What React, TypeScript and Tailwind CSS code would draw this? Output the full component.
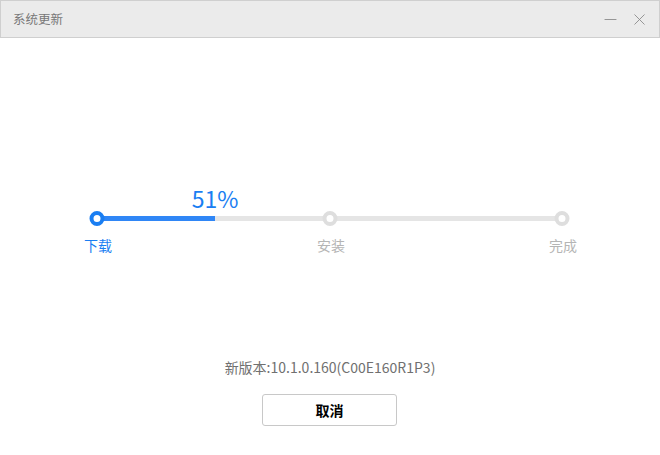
import { X, Minus } from "lucide-react";

const font = { fontFamily: '"Microsoft YaHei", "Noto Sans CJK SC", sans-serif' };

const steps = [
  { label: "下载", x: 97, done: true },
  { label: "安装", x: 330, done: false },
  { label: "完成", x: 562, done: false },
];

export default function App() {
  const percent = 51;
  const trackStart = 97;
  const trackEnd = 562;
  const fillEnd = 215;

  return (
    <div className="h-[455px] w-[660px] bg-white" style={font}>
      <div className="flex h-[38px] items-center justify-between border border-[#cfcfcf] bg-[#ebebeb] pl-3 pr-2.5">
        <span className="text-[12.5px] text-[#777]">系统更新</span>
        <div className="flex items-center gap-2.5 text-[#888]">
          <Minus size={19} strokeWidth={1.1} />
          <X size={19} strokeWidth={1.1} />
        </div>
      </div>

      <div className="relative mt-[148px] h-[80px] w-full">
        <span
          className="absolute top-[1px] -translate-x-1/2 text-[23px] leading-none text-[#1a7ef2]"
          style={{ left: fillEnd }}
        >
          {percent}%
        </span>
        <div
          className="absolute top-[30px] h-[5px] bg-[#e5e5e5]"
          style={{ left: trackStart, width: trackEnd - trackStart }}
        />
        <div
          className="absolute top-[30px] h-[5px] bg-[#2f86f6]"
          style={{ left: trackStart, width: fillEnd - trackStart }}
        />
        {steps.map((s) => (
          <div key={s.label}>
            <span
              className={`absolute top-[25px] h-[15px] w-[15px] -translate-x-1/2 rounded-full border-[4px] bg-white ${
                s.done ? "border-[#1a7ef2]" : "border-[#dedede]"
              }`}
              style={{ left: s.x }}
            />
            <span
              className={`absolute top-[49px] -translate-x-1/2 text-[14px] ${
                s.done ? "text-[#1a7ef2]" : "text-[#b5b5b5]"
              }`}
              style={{ left: s.x + 1 }}
            >
              {s.label}
            </span>
          </div>
        ))}
      </div>

      <div className="mt-[91px] flex flex-col items-center">
        <p className="text-[14px] text-[#707070]">新版本:10.1.0.160(C00E160R1P3)</p>
        <button className="mt-[16px] ml-[-1px] flex h-[32px] w-[135px] items-center justify-center rounded-[3px] border border-[#c8c8c8] bg-white text-[14px] font-bold text-black">
          取消
        </button>
      </div>
    </div>
  );
}
